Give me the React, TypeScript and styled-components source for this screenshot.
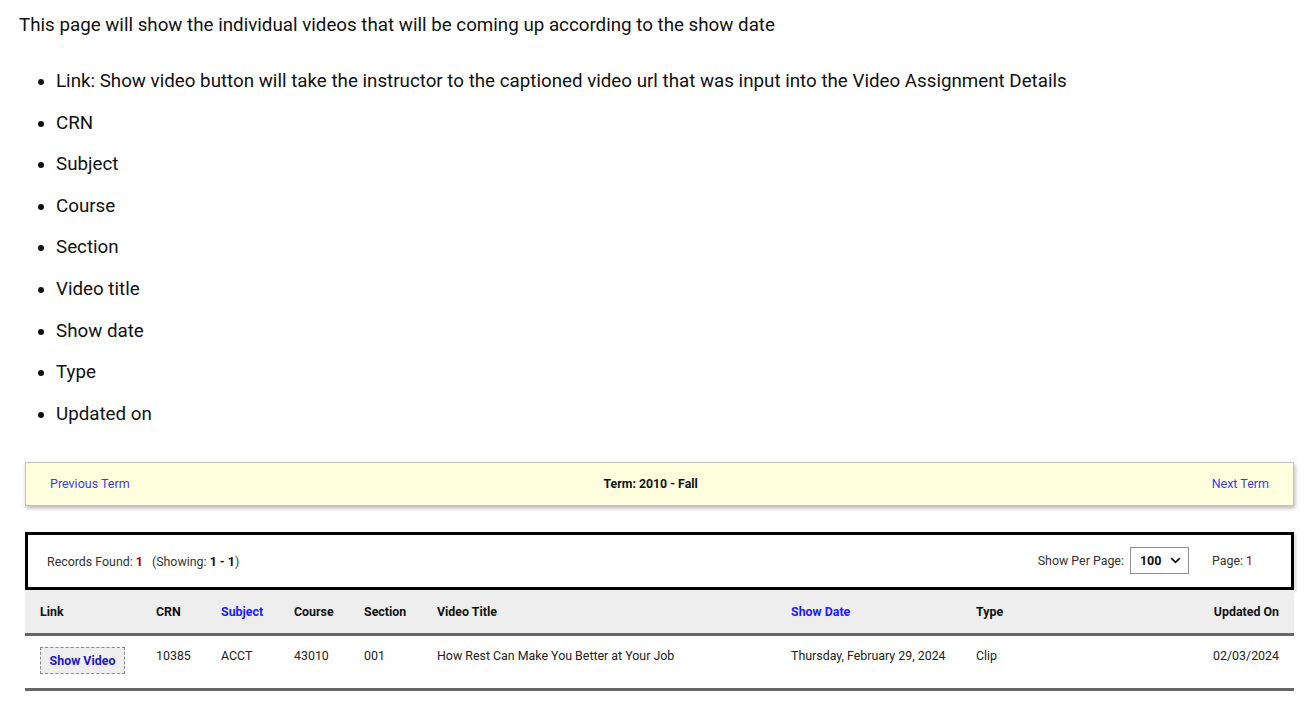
import React from 'react';
import styled, { createGlobalStyle } from 'styled-components';

const GlobalStyle = createGlobalStyle`
  html, body {
    margin: 0;
    padding: 0;
    background: #ffffff;
  }
  body {
    font-family: Roboto, 'Liberation Sans', Arial, sans-serif;
    color: #111111;
  }
`;

const bullets = [
  'Link: Show video button will take the instructor to the captioned video url that was input into the Video Assignment Details',
  'CRN',
  'Subject',
  'Course',
  'Section',
  'Video title',
  'Show date',
  'Type',
  'Updated on',
];

// 컬럼 정의
const columns = [
  { label: 'Link', width: 116, sortable: false },
  { label: 'CRN', width: 65, sortable: false },
  { label: 'Subject', width: 73, sortable: true },
  { label: 'Course', width: 70, sortable: false },
  { label: 'Section', width: 73, sortable: false },
  { label: 'Video Title', width: 354, sortable: false },
  { label: 'Show Date', width: 185, sortable: true },
  { label: 'Type', width: 237, sortable: false },
  { label: 'Updated On', width: 96, sortable: false, right: true },
];

const App = () => {
  return (
    <>
      <GlobalStyle />
      <Page>
        <Intro>
          This page will show the individual videos that will be coming up
          according to the show date
        </Intro>
        <BulletList>
          {bullets.map((b) => (
            <li key={b}>{b}</li>
          ))}
        </BulletList>

        <TermBar>
          <TermLink href="#">Previous Term</TermLink>
          <TermTitle>Term: 2010 - Fall</TermTitle>
          <TermLink href="#">Next Term</TermLink>
        </TermBar>

        <RecordsBox>
          <RecordsText>
            Records Found: <RedBold>1</RedBold>
            <Showing>
              (Showing: <b>1 - 1</b>)
            </Showing>
          </RecordsText>
          <PagerGroup>
            <PerPage>
              Show Per Page:
              <SelectBox>
                <span>100</span>
                <svg width="11" height="7" viewBox="0 0 11 7">
                  <path
                    d="M1.2 1.2 L5.5 5.3 L9.8 1.2"
                    fill="none"
                    stroke="#111"
                    strokeWidth="1.8"
                  />
                </svg>
              </SelectBox>
            </PerPage>
            <span>
              Page: <RedText>1</RedText>
            </span>
          </PagerGroup>
        </RecordsBox>

        <Table>
          <colgroup>
            {columns.map((c) => (
              <col key={c.label} style={{ width: c.width }} />
            ))}
          </colgroup>
          <thead>
            <tr>
              {columns.map((c) => (
                <HeadCell key={c.label} $sortable={c.sortable} $right={c.right}>
                  {c.label}
                </HeadCell>
              ))}
            </tr>
          </thead>
          <tbody>
            <tr>
              <Cell>
                <ShowVideoButton>Show Video</ShowVideoButton>
              </Cell>
              <Cell>10385</Cell>
              <Cell>ACCT</Cell>
              <Cell>43010</Cell>
              <Cell>001</Cell>
              <Cell>How Rest Can Make You Better at Your Job</Cell>
              <Cell>Thursday, February 29, 2024</Cell>
              <Cell>Clip</Cell>
              <Cell $right>02/03/2024</Cell>
            </tr>
          </tbody>
        </Table>
      </Page>
    </>
  );
};

export default App;

const Page = styled.div`
  padding: 12px 19px 20px 19px;
`;

const Intro = styled.p`
  margin: 0;
  font-size: 18.75px;
  line-height: 27px;
`;

const BulletList = styled.ul`
  margin: 29px 0 0 0;
  padding-left: 37px;
  font-size: 18.75px;
  li {
    line-height: 27px;
    margin-bottom: 14.6px;
  }
  li:last-child {
    margin-bottom: 0;
  }
`;

const TermBar = styled.div`
  margin: 34px 0 0 6px;
  height: 42px;
  display: flex;
  align-items: center;
  justify-content: space-between;
  padding: 0 24px;
  background-color: #ffffdd;
  border: 1px solid #c4c4c4;
  box-shadow: 1px 2px 4px rgba(0, 0, 0, 0.3);
  font-size: 12.5px;
`;

const TermLink = styled.a`
  color: #3b3bf5;
  text-decoration: none;
`;

const TermTitle = styled.span`
  margin-right: 40px;
  font-weight: 700;
  font-size: 12.3px;
  color: #111;
`;

const RecordsBox = styled.div`
  margin: 26px 0 0 6px;
  height: 52px;
  display: flex;
  align-items: center;
  justify-content: space-between;
  padding: 0 38px 0 19px;
  border: 3px solid #000;
  box-shadow: 2px 2px 3px rgba(0, 0, 0, 0.15);
  font-size: 12.4px;
  color: #333;
`;

const RecordsText = styled.span`
  margin-top: 1px;
  b {
    color: #111;
  }
`;

const RedBold = styled.b`
  color: #a00000 !important;
`;

const RedText = styled.span`
  color: #a00000;
`;

const Showing = styled.span`
  margin-left: 9px;
`;

const PagerGroup = styled.div`
  display: flex;
  align-items: center;
  gap: 23px;
`;

const PerPage = styled.div`
  display: flex;
  align-items: center;
  gap: 6px;
`;

const SelectBox = styled.div`
  width: 59px;
  height: 27px;
  box-sizing: border-box;
  border: 1px solid #8f8f8f;
  display: flex;
  align-items: center;
  justify-content: space-between;
  padding: 0 7px 0 9px;
  font-weight: 700;
  color: #111;
  font-size: 12.5px;
`;

const Table = styled.table`
  margin-left: 6px;
  width: calc(100% - 6px);
  border-collapse: collapse;
  table-layout: fixed;
  font-size: 12.4px;
`;

const HeadCell = styled.th<{ $sortable?: boolean; $right?: boolean }>`
  height: 43px;
  padding: 0 15px;
  text-align: ${(p) => (p.$right ? 'right' : 'left')};
  background-color: #eeeeee;
  border-bottom: 3px solid #666666;
  font-weight: 700;
  color: ${(p) => (p.$sortable ? '#1a1aff' : '#111')};
  white-space: nowrap;
`;

const Cell = styled.td<{ $right?: boolean }>`
  height: 55px;
  padding: 0 15px;
  vertical-align: top;
  padding-top: 12px;
  box-sizing: border-box;
  text-align: ${(p) => (p.$right ? 'right' : 'left')};
  border-bottom: 3px solid #666666;
  color: #222;
  white-space: nowrap;
`;

const ShowVideoButton = styled.button`
  margin-top: -1px;
  width: 85px;
  height: 27px;
  background-color: #eeeeee;
  border: 1px dashed #888;
  color: #1a1acc;
  font-family: Roboto, 'Liberation Sans', Arial, sans-serif;
  font-weight: 700;
  font-size: 12.4px;
  cursor: pointer;
  padding: 0;
`;
